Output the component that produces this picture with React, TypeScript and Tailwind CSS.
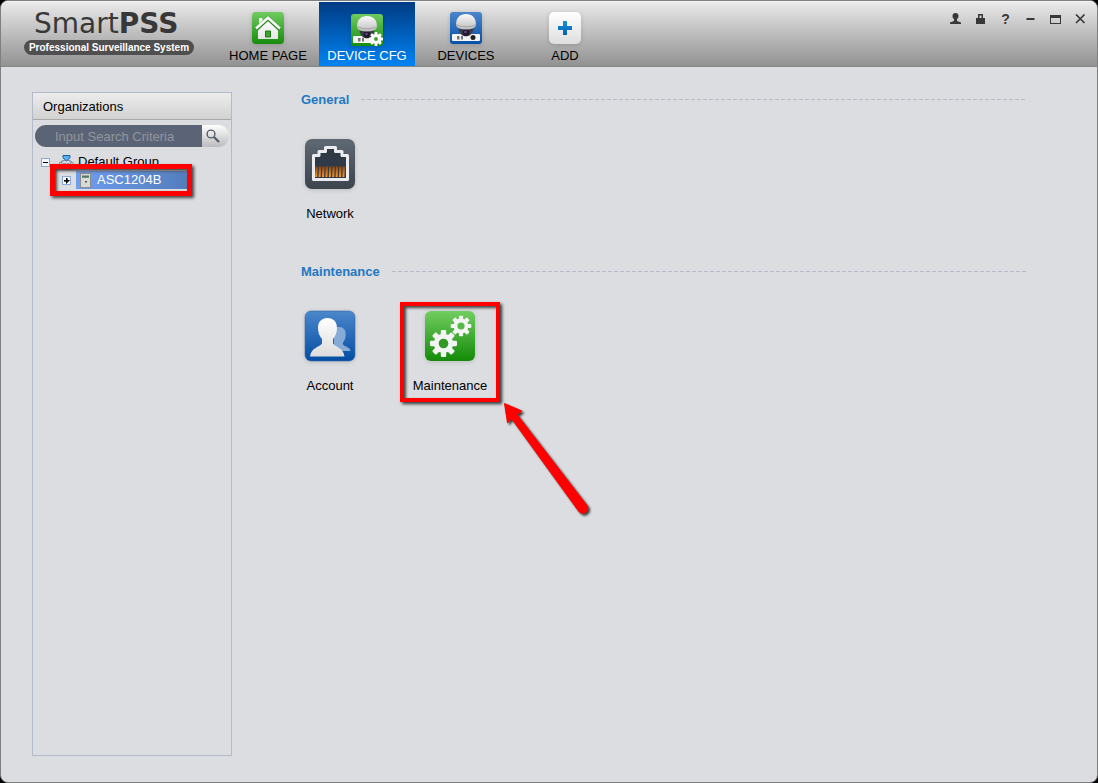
import React, { useState } from 'react';
import clsx from 'clsx';

const Gear = ({ cx, cy, r, hole, fill = '#f4f4f4', hollow = '#3fa52f' }: { cx: number; cy: number; r: number; hole: number; fill?: string; hollow?: string }) => {
    const body = r * 0.72;
    const w = r * 0.4;
    return (
        <g transform={`translate(${cx} ${cy})`} fill={fill}>
            {[0, 45, 90, 135].map((deg) => (
                <rect key={deg} x={-w / 2} y={-r} width={w} height={r * 2} rx={w * 0.2} transform={`rotate(${deg})`} />
            ))}
            <circle r={body} />
            <circle r={hole} fill={hollow} />
        </g>
    );
};

const Gradient = ({ id, from, to }: { id: string; from: string; to: string }) => (
    <linearGradient id={id} x1="0" y1="0" x2="0" y2="1">
        <stop offset="0" stopColor={from} />
        <stop offset="1" stopColor={to} />
    </linearGradient>
);

const HomeIcon = () => (
    <svg className="size-8 drop-shadow-sm" viewBox="0 0 32 32">
        <defs>
            <Gradient id="home-bg" from="#6fcb5f" to="#178c0d" />
            <Gradient id="home-fg" from="#ffffff" to="#e4e4e4" />
        </defs>
        <rect width="32" height="32" rx="4" fill="url(#home-bg)" />
        <path d="M7 6h3.500v6H7z" fill="#f4f4f4" />
        <path d="M6 17.500 16 9l10 8.500V27H6z" fill="url(#home-fg)" />
        <path d="M4 17.500 16 6.200 28 17.500" fill="none" stroke="#2e8b24" strokeWidth="4" />
        <path d="M4 16.500 16 5.700 28 16.500" fill="none" stroke="#fafafa" strokeWidth="2.600" />
        <path d="M13.500 19h5v6h-5z" fill="#3ca32d" stroke="#1f7a16" strokeWidth="1" />
    </svg>
);

const CameraIcon = ({ name, from, to, gear }: { name: string; from: string; to: string; gear?: boolean }) => (
    <svg className="size-8 drop-shadow-sm" viewBox="0 0 32 32">
        <defs>
            <Gradient id={`${name}-bg`} from={from} to={to} />
            <Gradient id={`${name}-dome`} from="#fbfbfb" to="#bdbdbd" />
        </defs>
        <rect width="32" height="32" rx="3" fill={`url(#${name}-bg)`} />
        <rect x="2" y="22" width="28" height="7" rx="1" fill="#f3f3f3" />
        <path d="M7 24h2.500v3.500H7zM11 24h2v3.500h-2z" fill="#777" />
        <circle cx="23" cy="25.500" r="2.500" fill="#222" />
        <path d="M8.500 16.500h15c-.6 5-3.500 7.800-7.500 7.800s-6.900-2.800-7.500-7.800z" fill="#3c3d48" />
        <circle cx="16" cy="20.500" r="3.400" fill="#20182c" />
        <circle cx="15.500" cy="20" r="1.300" fill="#65448a" />
        <path d="M6 12.500C6 6 10 2 16 2s10 4 10 10.500c0 2-1.500 3.200-3.500 4-4 1.400-9 1.400-13 0C7.500 15.700 6 14.500 6 12.500z" fill={`url(#${name}-dome)`} />
        <path d="M6.200 12.500c4 3 15.600 3 19.600 0" fill="none" stroke="#999" strokeWidth=".8" />
        {gear && <Gear cx={25} cy={25} r={7} hole={2} fill="#ffffff" hollow="#4a9a3d" />}
    </svg>
);

const AddIcon = () => (
    <svg className="size-8 drop-shadow-sm" viewBox="0 0 32 32">
        <defs>
            <Gradient id="add-bg" from="#ffffff" to="#dedede" />
            <Gradient id="add-fg" from="#1593d4" to="#0560b5" />
        </defs>
        <rect width="32" height="32" rx="5" fill="url(#add-bg)" />
        <path d="M14 9h4v5h5v4h-5v5h-4v-5H9v-4h5z" fill="url(#add-fg)" />
    </svg>
);

const NetworkIcon = () => (
    <svg className="size-[52px] drop-shadow-sm" viewBox="0 0 52 52">
        <defs>
            <Gradient id="net-bg" from="#5f6974" to="#3d444c" />
            <Gradient id="net-pin" from="#8a4513" to="#ff9a24" />
        </defs>
        <rect x="1" y="1" width="50" height="50" rx="7" fill="url(#net-bg)" />
        <path d="M9.500 41.500V17.500H15v-4h6.500V9.500h10v4H38v4h5.500v24z" fill="#303a46" stroke="#ebecef" strokeWidth="3" strokeLinejoin="round" />
        {[11.5, 14.9, 18.3, 21.7, 25.1, 28.5, 31.9, 35.3, 38.7].map((x) => (
            <path key={x} d={`M${x} 28.500h2.400l-.7 10.500h-2z`} fill="url(#net-pin)" />
        ))}
    </svg>
);

const AccountIcon = () => (
    <svg className="size-[52px] drop-shadow-sm" viewBox="0 0 52 52">
        <defs>
            <Gradient id="acc-bg" from="#4b87ca" to="#044da4" />
            <Gradient id="acc-fg" from="#ffffff" to="#dcdcdc" />
        </defs>
        <rect x="1" y="1" width="50" height="50" rx="6" fill="url(#acc-bg)" stroke="#3768a8" strokeWidth=".6" />
        <path d="M35 17c4.800 0 7 3 6.700 8-.2 3-1.200 5.500-2.700 7.500v2c1.500 2.500 7 2 7.500 6.500H30V18c1.500-.7 3-1 5-1z" fill="#86abd7" />
        <path d="M23.500 8c6 0 9.700 4.200 9.500 10-.1 4.800-1.500 8-4 11v4.500c2 3.500 10.500 4 11.500 13H6c1-9 10-9.500 12-13V29c-2.500-3-3.900-6.200-4-11C13.800 12.200 17.500 8 23.500 8z" fill="url(#acc-fg)" />
    </svg>
);

const MaintenanceIcon = () => (
    <svg className="size-[52px] drop-shadow-sm" viewBox="0 0 52 52">
        <defs>
            <Gradient id="mnt-bg" from="#71cd60" to="#138b08" />
        </defs>
        <rect x="1" y="1" width="50" height="50" rx="6" fill="url(#mnt-bg)" />
        <Gear cx={19.5} cy={33.5} r={13.5} hole={4.8} hollow="#2f9b22" />
        <Gear cx={37} cy={16} r={10.3} hole={3.6} hollow="#57b947" />
    </svg>
);

const tabs = [
    { label: 'HOME PAGE', icon: <HomeIcon /> },
    { label: 'DEVICE CFG', icon: <CameraIcon name="cfg" from="#70cc5f" to="#168c0c" gear /> },
    { label: 'DEVICES', icon: <CameraIcon name="dev" from="#4a86c9" to="#0850a8" /> },
    { label: 'ADD', icon: <AddIcon /> },
];

const windowButtons = [
    { label: 'User', icon: <path d="M6.500 0a3 3 0 0 1 3 3c0 1.500-.7 2.500-1.500 3.200V8l4 1.500V11H1V9.500L5 8V6.200C4.200 5.500 3.500 4.500 3.500 3a3 3 0 0 1 3-3z" fill="#383838" /> },
    { label: 'Lock', icon: <path d="M4 1h5v4h2v6H2V5h2zm1.500 1.500V5h2V2.500z" fill="#383838" fillRule="evenodd" /> },
    { label: 'Help', icon: null },
    { label: 'Minimize', icon: <path d="M2.500 5h8v2h-8z" fill="#383838" /> },
    { label: 'Maximize', icon: <path d="M1 2h11v9H1zm1 3v5h9V5z" fill="#383838" fillRule="evenodd" /> },
    { label: 'Close', icon: <path d="M2 1.500 10.500 10M10.500 1.500 2 10" stroke="#383838" strokeWidth="1.700" /> },
];

const Header = () => {
    const [active, setActive] = useState('DEVICE CFG');

    return (
        <header className="flex h-[66px] shrink-0 border-t border-b border-t-[#f4f4f4] border-b-[#858585] bg-linear-to-b from-[#eaeaea] to-[#929292]">
            <div className="flex w-[219px] flex-col pt-1.5 pl-[23px]">
                <h1 className="pl-2.5 font-['DejaVu_Sans'] text-[28px] leading-8 text-[#383838]">
                    Smart<b>PSS</b>
                </h1>
                <span className="h-[15px] w-[170px] rounded-full bg-[#4f4f4f] text-center text-[10px] leading-[15px] font-bold whitespace-nowrap text-white">
                    Professional Surveillance System
                </span>
            </div>
            <nav className="flex gap-[3px]">
                {tabs.map((tab) => (
                    <button
                        key={tab.label}
                        onClick={() => setActive(tab.label)}
                        className={clsx(
                            'flex w-24 flex-col items-center justify-end text-[13px] leading-5',
                            active === tab.label ? 'bg-linear-to-b from-[#003c84] to-[#0084f4] text-white' : 'gap-0.5 text-black'
                        )}
                    >
                        {tab.icon}
                        {tab.label}
                    </button>
                ))}
            </nav>
            <div className="mt-[5px] mr-1 ml-auto flex h-6">
                {windowButtons.map((btn) => (
                    <button key={btn.label} aria-label={btn.label} className="flex w-[25px] items-center justify-center text-[14px] font-bold text-[#383838]">
                        {btn.icon ? <svg className="h-3 w-[13px]" viewBox="0 0 13 12">{btn.icon}</svg> : '?'}
                    </button>
                ))}
            </div>
        </header>
    );
};

const Toggle = ({ open }: { open: boolean }) => (
    <button aria-label={open ? 'Collapse' : 'Expand'} className="shrink-0">
        <svg className="size-[9px]" viewBox="0 0 9 9" shapeRendering="crispEdges">
            <rect x=".5" y=".5" width="8" height="8" fill="#f4f8ff" stroke="#8aa8d8" />
            <path d={open ? 'M2 4h5v1H2z' : 'M2 4h2V2h1v2h2v1H5v2H4V5H2z'} fill="#000" stroke="#000" strokeWidth={open ? 0 : 0.6} />
        </svg>
    </button>
);

const Sidebar = () => (
    <aside className="w-[200px] shrink-0 border border-[#b3bacb]">
        <h2 className="h-[27px] border-b border-[#a9a9a9] bg-linear-to-b from-[#ececec] to-[#d2d2d2] pl-2.5 text-[13px] leading-7">Organizations</h2>
        <div className="mx-0.5 mt-[5px] flex h-[22px] overflow-hidden rounded-full">
            <input
                aria-label="Search"
                placeholder="Input Search Criteria"
                className="min-w-0 flex-1 bg-[#5b6476] pt-0.5 pl-5 text-[13px] text-white outline-none placeholder:text-[#92969e]"
            />
            <button aria-label="Search" className="flex w-[27px] items-center bg-linear-to-b from-white to-[#bcbcbe] pl-1">
                <svg className="size-[14px]" viewBox="0 0 14 14" fill="none" stroke="#535b6c">
                    <circle cx="5" cy="5" r="3.900" strokeWidth="1.400" />
                    <path d="m8 8 5 5" strokeWidth="2.200" />
                </svg>
            </button>
        </div>
        <ul className="mt-1.5 text-[13px] leading-5">
            <li>
                <div className="flex h-[18px] items-center pl-2">
                    <Toggle open />
                    <svg className="ml-2 size-4" viewBox="0 0 16 16">
                        <path d="M1.500 8.500h2.500V16H1.500zM5.500 9.500h2V16h-2zM9 9.500h2V16H9zM12.500 8.500H15V16h-2.500z" fill="#e5e8ee" stroke="#78808e" strokeWidth=".8" />
                        <path d="M3 8.500C3 6.500 6 7 8.200 5.500 10.500 7 13.500 6.500 13.500 8.500" fill="none" stroke="#808a98" strokeWidth="1.200" />
                        <path d="M5 1.500h7v2.300L8.500 7 5 3.800z" fill="#5cb0ee" stroke="#1760a8" />
                    </svg>
                    <span className="ml-1">Default Group</span>
                </div>
                <ul>
                    <li className="relative mr-[39px] ml-[17px] flex h-[18px] items-center pl-3">
                        <Toggle open={false} />
                        <div className="ml-[5px] flex h-full flex-1 items-center bg-linear-to-r from-[#6f9df0] to-[#527cba] pl-1 text-white">
                            <svg className="h-[15px] w-[11px]" viewBox="0 0 11 15">
                                <rect x=".5" y=".5" width="10" height="14" fill="#d9d9d6" stroke="#8c8c8c" />
                                <path d="M2 2.500h7v2.200H2z" fill="#4b7a62" />
                                <path d="M5 8h2v1.500H5z" fill="#555" />
                            </svg>
                            <span className="ml-1.5">ASC1204B</span>
                        </div>
                        <div className="pointer-events-none absolute -inset-y-[7px] inset-x-0 border-5 border-[#fe0000] shadow-[2px_2px_3px_#444,inset_2px_2px_3px_#444]" />
                    </li>
                </ul>
            </li>
        </ul>
    </aside>
);

const Section = ({ title, children }: { title: string; children: React.ReactNode }) => (
    <section>
        <div className="flex items-center gap-3 pl-5">
            <h2 className="text-[13px] leading-[15px] font-bold text-[#2378c2]">{title}</h2>
            <div className="h-px flex-1 bg-[repeating-linear-gradient(90deg,#b5b9c8_0_4px,transparent_4px_6px)]" />
        </div>
        <div className="mt-[31px] flex gap-[22px]">{children}</div>
    </section>
);

const Item = ({ label, icon, highlighted }: { label: string; icon: React.ReactNode; highlighted?: boolean }) => (
    <div className="relative w-[98px]">
        <button className="flex w-full flex-col items-center gap-4 text-[13px] leading-4">
            {icon}
            {label}
        </button>
        {highlighted && (
            <>
                <div className="pointer-events-none absolute -inset-x-px -inset-y-2 border-4 border-[#fe0000] shadow-[2px_2px_3px_#333,inset_2px_2px_3px_#444]" />
                <svg className="pointer-events-none absolute top-[92px] left-[100px] h-[116px] w-[92px] drop-shadow-[2px_2px_1px_#444]" viewBox="0 0 92 116">
                    <path d="M3.500 1.500 21 9l-5 3.500 70 91a5 5 0 0 1-8.500 5.500L10.500 16.500 6.500 21z" fill="#fe0000" stroke="#fe0000" strokeLinejoin="round" />
                </svg>
            </>
        )}
    </div>
);

const App = () => (
    <div className="h-screen bg-black font-['Liberation_Sans',sans-serif] text-black">
        <div className="flex h-full flex-col overflow-hidden rounded-lg border border-[#7f7f7f] bg-[#dcdde1]">
            <Header />
            <div className="flex min-h-0 flex-1 pt-[25px] pb-[26px] pl-[31px]">
                <Sidebar />
                <main className="flex min-w-0 flex-1 flex-col gap-[42px] pr-[71px] pl-[49px]">
                    <Section title="General">
                        <Item label="Network" icon={<NetworkIcon />} />
                    </Section>
                    <Section title="Maintenance">
                        <Item label="Account" icon={<AccountIcon />} />
                        <Item label="Maintenance" icon={<MaintenanceIcon />} highlighted />
                    </Section>
                </main>
            </div>
        </div>
    </div>
);

export default App;
